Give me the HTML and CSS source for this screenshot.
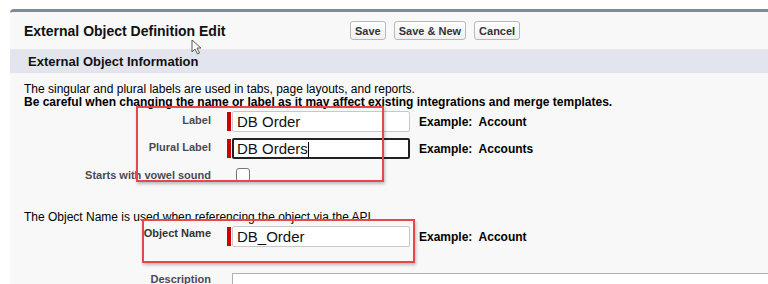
FILE: index.html
```html
<!DOCTYPE html>
<html>
<head>
    <title>External Object Definition Edit</title>
    <link rel="stylesheet" href="styles.css">
</head>
<body>
    <div class="page">
        <div class="panel">
            <!-- Page block header -->
            <div class="pb-header">
                <h2 class="pb-title">External Object Definition Edit</h2>
                <div class="pb-buttons">
                    <button class="btn">Save</button>
                    <button class="btn">Save &amp; New</button>
                    <button class="btn">Cancel</button>
                </div>
            </div>

            <!-- Section -->
            <h3 class="section">External Object Information</h3>

            <div class="body">
                <p class="intro">The singular and plural labels are used in tabs, page layouts, and reports.<br>
                <b>Be careful when changing the name or label as it may affect existing integrations and merge templates.</b></p>

                <div class="row">
                    <label class="lbl">Label</label>
                    <span class="req"></span>
                    <input class="field" type="text" value="DB Order">
                    <span class="example">Example:&nbsp; Account</span>
                </div>
                <div class="row">
                    <label class="lbl">Plural Label</label>
                    <span class="req"></span>
                    <div class="field focused">DB Orders<span class="caret"></span></div>
                    <span class="example">Example:&nbsp; Accounts</span>
                </div>
                <div class="row row-check">
                    <label class="lbl">Starts with vowel sound</label>
                    <span class="noreq"></span>
                    <span class="check"></span>
                </div>

                <p class="api-note">The Object Name is used when referencing the object via the API.</p>

                <div class="row">
                    <label class="lbl lbl-dark">Object Name</label>
                    <span class="req"></span>
                    <input class="field" type="text" value="DB_Order">
                    <span class="example">Example:&nbsp; Account</span>
                </div>
                <div class="row row-desc">
                    <label class="lbl">Description</label>
                    <span class="noreq"></span>
                    <div class="desc"></div>
                </div>
            </div>
        </div>
    </div>

    <!-- Annotation boxes drawn over the form -->
    <div class="mark mark-labels"></div>
    <div class="mark mark-name"></div>

    <!-- Mouse pointer -->
    <svg class="pointer" width="12" height="16" viewBox="0 0 12 16">
        <path d="M1 1 L1 13 L4 10 L6.5 15 L8.5 14 L6 9 L10 9 Z" fill="#fff" stroke="#555" stroke-width="1"/>
    </svg>
</body>
</html>
```

FILE: styles.css
```css
/* Global styles */
body {
    margin: 0;
    background-color: #ffffff;
    font-family: Arial, "Liberation Sans", sans-serif;
    color: #000;
    overflow: hidden;
}

.page {
    padding: 9px 0 0 10px;
}

/* Panel with slate top border */
.panel {
    background-color: #f8f8f8;
    border-top: 3px solid #7f8a99;
    border-top-left-radius: 4px;
    height: 300px;
}

/* Header with title and buttons */
.pb-header {
    display: flex;
    align-items: center;
    height: 37px;
    padding-left: 14px;
    border-bottom: 1px solid #e8e8e8;
}

.pb-title {
    width: 326px;
    margin: 0;
    font-size: 14px;
    font-weight: bold;
    color: #111;
}

.pb-buttons {
    display: flex;
    gap: 8px;
}

.btn {
    height: 19px;
    padding: 0 4px;
    font-family: Arial, "Liberation Sans", sans-serif;
    font-size: 11px;
    font-weight: bold;
    color: #333;
    background: linear-gradient(#ffffff, #f1f1f1);
    border: 1px solid #b8b8b8;
    border-radius: 3px;
}

/* Section title band */
.section {
    margin: 0;
    height: 23px;
    line-height: 23px;
    padding-left: 18px;
    background-color: #e3e5ee;
    font-size: 13px;
    font-weight: bold;
    color: #111;
}

.body {
    padding-left: 14px;
}

.intro {
    margin: 0;
    padding-top: 10px;
    font-size: 12px;
    line-height: 13px;
}

/* Form rows */
.row {
    display: flex;
    align-items: flex-start;
    margin-top: 6px;
}

.intro + .row {
    margin-top: 2px;
}

.lbl {
    width: 187px;
    padding-top: 3px;
    text-align: right;
    font-size: 11px;
    font-weight: bold;
    color: #4a4a56;
}

.lbl-dark {
    color: #333;
    padding-top: 1px;
}

.req {
    width: 4px;
    height: 19px;
    margin: 1px 0 0 16px;
    background-color: #c00;
}

.noreq {
    width: 4px;
    margin-left: 16px;
}

.field {
    box-sizing: border-box;
    width: 178px;
    height: 21px;
    margin: 0 0 0 1px;
    padding: 0 4px;
    font-family: Arial, "Liberation Sans", sans-serif;
    font-size: 15px;
    line-height: 19px;
    color: #111;
    background-color: #fff;
    border: 1px solid #c8c8c8;
    border-radius: 2px;
}

.focused {
    border: 2px solid #222;
    line-height: 17px;
    padding-left: 3px;
}

.caret {
    display: inline-block;
    width: 1px;
    height: 15px;
    vertical-align: -3px;
    background-color: #000;
}

.example {
    margin-left: 9px;
    padding-top: 4px;
    font-size: 12px;
    font-weight: bold;
}

.row-check {
    margin-top: 7px;
}

.check {
    box-sizing: border-box;
    width: 14px;
    height: 14px;
    margin: 2px 0 0 5px;
    background-color: #fff;
    border: 1px solid #777;
    border-radius: 3px;
}

.api-note {
    margin: 29px 0 0 0;
    font-size: 12px;
    line-height: 13px;
}

.api-note + .row {
    margin-top: 2px;
}

.row-desc {
    margin-top: 26px;
}

.row-desc .lbl {
    padding-top: 0;
}

.desc {
    flex: 1;
    height: 40px;
    margin-left: 1px;
    background-color: #fff;
    border: 1px solid #b0b0b0;
    border-right: none;
}

/* Red annotation boxes */
.mark {
    position: absolute;
    border: 2px solid #e5474e;
    box-shadow: 1px 2px 3px rgba(0, 0, 0, 0.25);
}

.mark-labels {
    left: 136px;
    top: 106px;
    width: 244px;
    height: 72px;
}

.mark-name {
    left: 142px;
    top: 219px;
    width: 269px;
    height: 40px;
}

.pointer {
    position: absolute;
    left: 191px;
    top: 39px;
}
```
